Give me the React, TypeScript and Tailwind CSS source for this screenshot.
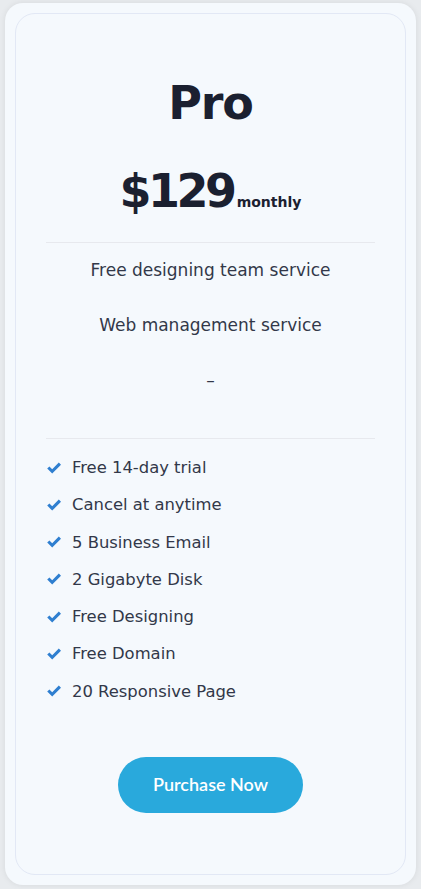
const services = ['Free designing team service', 'Web management service', '–'];

const features = [
    'Free 14-day trial',
    'Cancel at anytime',
    '5 Business Email',
    '2 Gigabyte Disk',
    'Free Designing',
    'Free Domain',
    '20 Responsive Page',
];

function CheckIcon() {
    return (
        <svg viewBox="0 0 16 16" className="w-[16px] h-[16px] shrink-0" fill="#2f7fd0">
            <path d="M1.2 8.6 L3.4 6.5 L6.2 9.2 L12.8 2.6 L15 4.8 L6.2 13.6 Z" />
        </svg>
    );
}

export default function App() {
    return (
        <div className="w-full min-h-[889px] bg-[#e8ebee] pt-[3px] px-[5px] pb-[4px] font-['DejaVu_Sans',sans-serif]">
            <div className="rounded-[18px] bg-[#f5f9fd] p-[10px] shadow-[0_0_6px_rgba(0,0,0,0.08)]">
                <div className="rounded-[20px] border border-[#e2e8f5] h-[862px] px-[30px] flex flex-col items-center">
                    <h2 className="mt-[66px] text-[46px] leading-none font-bold text-[#1b2030] tracking-tight">Pro</h2>

                    <div className="mt-[42px] flex items-baseline text-[#1b2030]">
                        <span className="text-[46px] leading-none font-bold tracking-[-3.5px]">$129</span>
                        <span className="text-[14px] font-bold ml-[3px]">monthly</span>
                    </div>

                    <div className="w-full h-px bg-[#e7e9ee] mt-[28px]" />

                    <div className="flex flex-col items-center text-[17px] text-[#323849] mt-[17px] gap-[34px] leading-[21px]">
                        {services.map((s) => (
                            <p key={s}>{s}</p>
                        ))}
                    </div>

                    <div className="w-full h-px bg-[#e7e9ee] mt-[47px]" />

                    <ul className="w-full mt-[18px] flex flex-col gap-[16.3px]">
                        {features.map((f) => (
                            <li key={f} className="flex items-center gap-[10px] text-[16.4px] leading-[21px] text-[#323849]">
                                <CheckIcon />
                                <span>{f}</span>
                            </li>
                        ))}
                    </ul>

                    <button className="mt-[55px] w-[185px] h-[56px] rounded-full bg-[#29a9dc] text-white text-[18px] font-semibold font-['Lato',sans-serif]">
                        Purchase Now
                    </button>
                </div>
            </div>
        </div>
    );
}
